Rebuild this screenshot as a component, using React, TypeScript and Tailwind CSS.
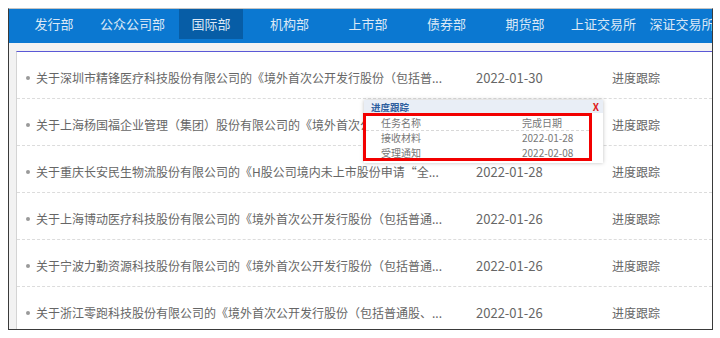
import React from "react";

const tabs = [
  "发行部",
  "公众公司部",
  "国际部",
  "机构部",
  "上市部",
  "债券部",
  "期货部",
  "上证交易所",
  "深证交易所",
];

const rows = [
  {
    title: "关于深圳市精锋医疗科技股份有限公司的《境外首次公开发行股份（包括普...",
    date: "2022-01-30",
  },
  {
    title: "关于上海杨国福企业管理（集团）股份有限公司的《境外首次公开发行股份（包括...",
    date: "2022-01-28",
  },
  {
    title: "关于重庆长安民生物流股份有限公司的《H股公司境内未上市股份申请“全...",
    date: "2022-01-28",
  },
  {
    title: "关于上海博动医疗科技股份有限公司的《境外首次公开发行股份（包括普通...",
    date: "2022-01-26",
  },
  {
    title: "关于宁波力勤资源科技股份有限公司的《境外首次公开发行股份（包括普通...",
    date: "2022-01-26",
  },
  {
    title: "关于浙江零跑科技股份有限公司的《境外首次公开发行股份（包括普通股、...",
    date: "2022-01-26",
  },
];

const steps = [
  { name: "接收材料", date: "2022-01-28" },
  { name: "受理通知", date: "2022-02-08" },
];

export default function App() {
  return (
    <div className="h-[338px] w-[720px] bg-white pl-[8px] pt-[8px] font-['Noto_Sans_CJK_SC','Noto_Sans',sans-serif]">
      <div className="flex h-[322px] w-[705px] flex-col overflow-hidden border border-[#3a3a3a] border-t-[#c4c4c4] bg-[#f2f2f2]">
        {/* top nav */}
        <nav className="flex h-[34px] shrink-0 gap-[14.5px] overflow-hidden bg-[#0b78d1] pl-[13px]">
          {tabs.map((t) => (
            <div
              key={t}
              className={`flex h-[30px] w-[64px] shrink-0 items-center justify-center whitespace-nowrap text-[13px] text-[#dbe8f6] ${
                t === "国际部" ? "bg-[#075da6]" : ""
              }`}
            >
              {t}
            </div>
          ))}
        </nav>

        {/* list */}
        <div className="flex-1 pl-[7px] pt-[8px]">
          <div className="relative h-full overflow-hidden border-l border-t border-l-[#d4d4d4] border-t-[#5b58d6] bg-white">
            {rows.map((r) => (
              <div
                key={r.title}
                className="flex h-[47px] items-center border-b border-dashed border-[#dcdcdc] pl-[9px] pt-[6px] text-[12px] text-[#666]"
              >
                <span className="mr-[6px] h-[4px] w-[4px] shrink-0 rounded-full bg-[#9a9a9a]" />
                <span className="w-[440px] shrink-0 whitespace-nowrap">{r.title}</span>
                <span className="w-[136px] shrink-0 text-[13px]">{r.date}</span>
                <span>进度跟踪</span>
              </div>
            ))}

            {/* progress popup */}
            <div className="absolute left-[347px] top-[48px] h-[63px] w-[239px] bg-white shadow-[0_0_4px_rgba(0,0,0,0.25)]">
              <div className="flex h-[13px] items-center justify-between bg-[#e9eef6] pl-[7px] pr-[4px]">
                <span className="text-[9.5px] font-bold leading-[12px] text-[#2c5d9e]">进度跟踪</span>
                <span className="text-[10px] font-bold leading-[12px] text-[#e0201c]">X</span>
              </div>
              <div className="-ml-[1px] h-[48px] w-[229px] border-[3px] border-[#f20000] text-[10px] leading-[12px] text-[#777]">
                <div className="flex h-[15px] items-center border-b border-dashed border-[#d8d8d8] pl-[15px]">
                  <span className="w-[141px]">任务名称</span>
                  <span>完成日期</span>
                </div>
                {steps.map((s) => (
                  <div key={s.name} className="flex h-[14.5px] items-center pl-[15px]">
                    <span className="w-[141px]">{s.name}</span>
                    <span>{s.date}</span>
                  </div>
                ))}
              </div>
            </div>
          </div>
        </div>
      </div>
    </div>
  );
}
